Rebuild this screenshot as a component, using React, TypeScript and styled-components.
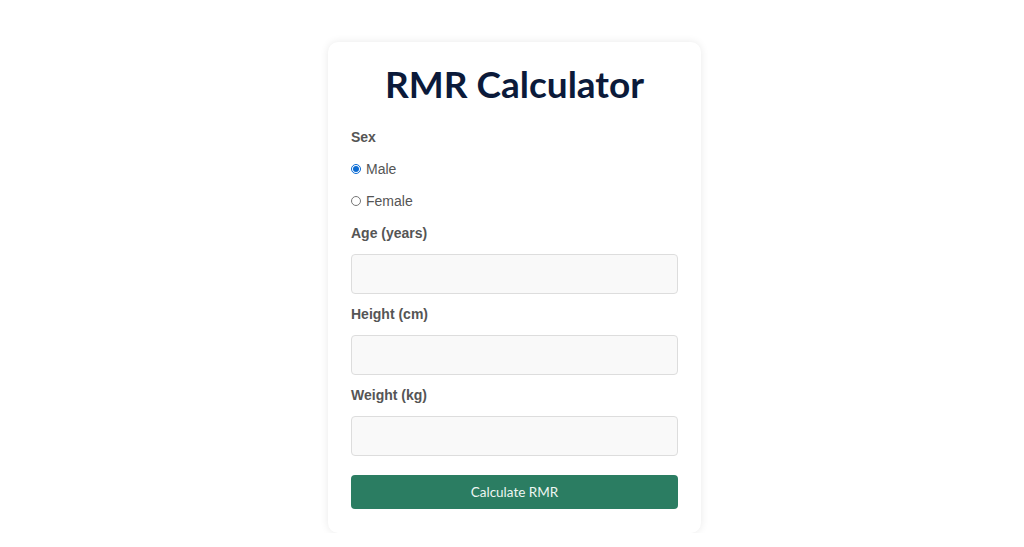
import React, { useState } from "react";
import styled, { createGlobalStyle } from "styled-components";

const Global = createGlobalStyle`
  html, body { margin: 0; padding: 0; background: #ffffff; }
  body { font-family: "Liberation Sans", Arial, sans-serif; }
  * { box-sizing: border-box; }
`;

const Page = styled.div`
  display: flex;
  justify-content: center;
  padding: 42px 0 0 5px;
`;

const Card = styled.form`
  width: 373px;
  background: #ffffff;
  border-radius: 10px;
  box-shadow: 0 0 8px rgba(0, 0, 0, 0.09);
  padding: 19px 23px 24px;
  display: flex;
  flex-direction: column;
`;

const Title = styled.h1`
  margin: 0 0 21px;
  text-align: center;
  font-family: Lato, "Noto Sans", sans-serif;
  font-weight: 700;
  font-size: 37px;
  line-height: 46px;
  color: #0b1a3a;
`;

const Label = styled.label<{ $gap?: number }>`
  display: block;
  font-size: 14px;
  font-weight: 700;
  line-height: 18px;
  color: #555555;
  margin-bottom: ${(p) => p.$gap ?? 12}px;
`;

const RadioRow = styled.label`
  display: flex;
  align-items: center;
  height: 18px;
  margin-bottom: 14px;
  font-size: 14px;
  color: #555555;
  cursor: pointer;
`;

const Radio = styled.input`
  margin: 0 5px 0 0;
  width: 10px;
  height: 10px;
  accent-color: #0b6bd3;
`;

const Field = styled.div`
  display: flex;
  flex-direction: column;
  margin-bottom: 11px;
`;

const Input = styled.input`
  width: 100%;
  height: 40px;
  border: 1px solid #dddddd;
  border-radius: 4px;
  background: #f9f9f9;
  padding: 0 10px;
  font-size: 14px;
  font-family: "Liberation Sans", Arial, sans-serif;
  outline: none;
`;

const Button = styled.button`
  margin-top: 8px;
  height: 34px;
  width: 100%;
  border: none;
  border-radius: 4px;
  background: #2b7d62;
  color: #eef6f2;
  font-family: Lato, "Noto Sans", sans-serif;
  font-size: 13.5px;
  cursor: pointer;
`;

export default function App() {
  const [sex, setSex] = useState("male");
  return (
    <>
      <Global />
      <Page>
        <Card onSubmit={(e) => e.preventDefault()}>
          <Title>RMR Calculator</Title>
          <Label $gap={14}>Sex</Label>
          <RadioRow>
            <Radio type="radio" name="sex" checked={sex === "male"} onChange={() => setSex("male")} />
            Male
          </RadioRow>
          <RadioRow>
            <Radio type="radio" name="sex" checked={sex === "female"} onChange={() => setSex("female")} />
            Female
          </RadioRow>
          <Field>
            <Label>Age (years)</Label>
            <Input type="number" />
          </Field>
          <Field>
            <Label>Height (cm)</Label>
            <Input type="number" />
          </Field>
          <Field>
            <Label>Weight (kg)</Label>
            <Input type="number" />
          </Field>
          <Button type="submit">Calculate RMR</Button>
        </Card>
      </Page>
    </>
  );
}
